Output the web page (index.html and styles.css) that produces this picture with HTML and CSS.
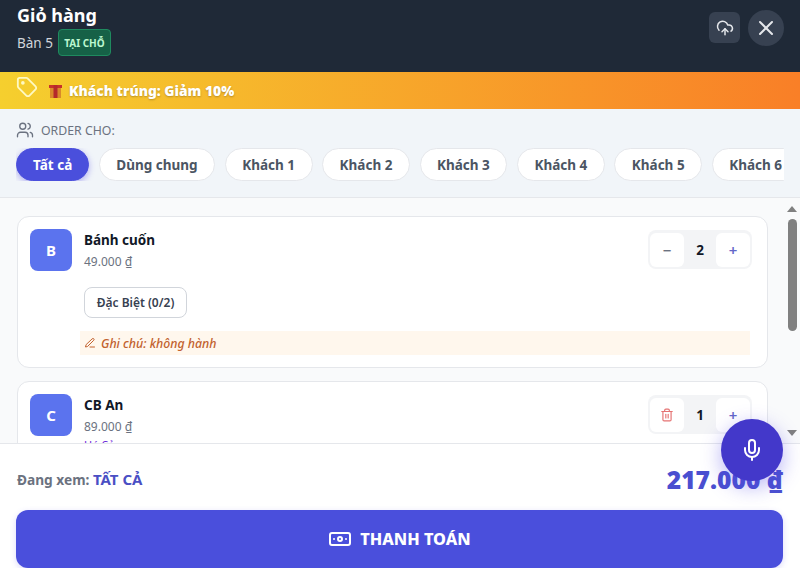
FILE: index.html
```html
<!DOCTYPE html>
<html lang="vi">

<head>
  <meta charset="UTF-8" />
  <meta name="viewport" content="width=device-width, initial-scale=1.0" />
  <link rel="stylesheet" href="styles.css">
  <title>Giỏ hàng</title>
</head>

<body>
  <div class="cart">
    <header class="cart-header">
      <div class="cart-title">
        <h1>Giỏ hàng</h1>
        <div class="table-line">
          <span>Bàn 5</span>
          <span class="tag-dine">TẠI CHỖ</span>
        </div>
      </div>
      <div class="header-actions">
        <button class="btn-upload" aria-label="Tải lên">
          <svg width="18" height="18" viewBox="0 0 24 24" fill="none" stroke="currentColor" stroke-width="2" stroke-linecap="round" stroke-linejoin="round">
            <path d="M12 13v8" />
            <path d="M4 14.9A7 7 0 1 1 15.7 8h1.8a4.5 4.5 0 0 1 2.5 8.2" />
            <path d="m8 17 4-4 4 4" />
          </svg>
        </button>
        <button class="btn-close" aria-label="Đóng">
          <svg width="24" height="24" viewBox="0 0 24 24" fill="none" stroke="currentColor" stroke-width="2" stroke-linecap="round">
            <path d="M18 6 6 18" />
            <path d="m6 6 12 12" />
          </svg>
        </button>
      </div>
    </header>

    <div class="promo">
      <svg class="promo-tag" width="22" height="22" viewBox="0 0 24 24" fill="none" stroke="currentColor" stroke-width="2" stroke-linecap="round" stroke-linejoin="round">
        <path d="M12.6 2.6A2 2 0 0 0 11.2 2H4a2 2 0 0 0-2 2v7.2a2 2 0 0 0 .6 1.4l8.7 8.7a2.4 2.4 0 0 0 3.4 0l6.6-6.6a2.4 2.4 0 0 0 0-3.4z" />
        <circle cx="7.5" cy="7.5" r="1" />
      </svg>
      <svg class="promo-gift" width="13" height="14" viewBox="0 0 13 14">
        <rect x="1" y="4" width="11" height="10" fill="#d9892a" />
        <rect x="0" y="1" width="13" height="3" fill="#c8302b" />
        <rect x="4.5" y="1" width="4" height="13" fill="#b5282b" />
      </svg>
      <span class="promo-text">Khách trúng: Giảm 10%</span>
    </div>

    <section class="guests">
      <div class="guests-label">
        <svg width="18" height="18" viewBox="0 0 24 24" fill="none" stroke="currentColor" stroke-width="1.8" stroke-linecap="round" stroke-linejoin="round">
          <path d="M16 21v-2a4 4 0 0 0-4-4H6a4 4 0 0 0-4 4v2" />
          <circle cx="9" cy="7" r="4" />
          <path d="M22 21v-2a4 4 0 0 0-3-3.87" />
          <path d="M16 3.13a4 4 0 0 1 0 7.75" />
        </svg>
        <span>ORDER CHO:</span>
      </div>
      <div class="chips">
        <button class="chip active">Tất cả</button>
        <button class="chip">Dùng chung</button>
        <button class="chip">Khách 1</button>
        <button class="chip">Khách 2</button>
        <button class="chip">Khách 3</button>
        <button class="chip">Khách 4</button>
        <button class="chip">Khách 5</button>
        <button class="chip">Khách 6</button>
      </div>
    </section>

    <div class="list-wrap">
      <main class="items">
        <article class="item">
          <div class="item-top">
            <div class="thumb">B</div>
            <div class="item-info">
              <h3>Bánh cuốn</h3>
              <div class="price">49.000 ₫</div>
            </div>
            <div class="stepper">
              <button class="step step-minus">−</button>
              <span class="qty">2</span>
              <button class="step step-plus">+</button>
            </div>
          </div>
          <button class="option">Đặc Biệt (0/2)</button>
          <div class="note">
            <svg width="12" height="12" viewBox="0 0 24 24" fill="none" stroke="currentColor" stroke-width="2" stroke-linecap="round" stroke-linejoin="round">
              <path d="M12 20h9" />
              <path d="M16.5 3.5a2.1 2.1 0 0 1 3 3L7 19l-4 1 1-4z" />
            </svg>
            <span>Ghi chú: không hành</span>
          </div>
        </article>

        <article class="item">
          <div class="item-top">
            <div class="thumb">C</div>
            <div class="item-info">
              <h3>CB An</h3>
              <div class="price">89.000 ₫</div>
              <div class="variant">Hé Cảo</div>
            </div>
            <div class="stepper">
              <button class="step step-trash" aria-label="Xóa">
                <svg width="14" height="14" viewBox="0 0 24 24" fill="none" stroke="currentColor" stroke-width="2" stroke-linecap="round" stroke-linejoin="round">
                  <path d="M3 6h18" />
                  <path d="M19 6v14a2 2 0 0 1-2 2H7a2 2 0 0 1-2-2V6" />
                  <path d="M8 6V4a2 2 0 0 1 2-2h4a2 2 0 0 1 2 2v2" />
                  <path d="M10 11v6" />
                  <path d="M14 11v6" />
                </svg>
              </button>
              <span class="qty">1</span>
              <button class="step step-plus">+</button>
            </div>
          </div>
        </article>
      </main>

      <div class="scrollbar">
        <span class="arrow arrow-up"></span>
        <span class="thumb-bar"></span>
        <span class="arrow arrow-down"></span>
      </div>
    </div>

    <footer class="cart-footer">
      <div class="summary">
        <div class="viewing">Đang xem: <span>TẤT CẢ</span></div>
        <div class="total">217.000 ₫</div>
      </div>
      <button class="pay">
        <svg width="24" height="24" viewBox="0 0 24 24" fill="none" stroke="currentColor" stroke-width="2" stroke-linecap="round" stroke-linejoin="round">
          <rect x="2" y="6" width="20" height="12" rx="2" />
          <circle cx="12" cy="12" r="2" />
          <path d="M6 12h.01M18 12h.01" />
        </svg>
        <span>THANH TOÁN</span>
      </button>
    </footer>

    <button class="mic" aria-label="Ghi âm">
      <svg width="24" height="24" viewBox="0 0 24 24" fill="none" stroke="currentColor" stroke-width="2" stroke-linecap="round" stroke-linejoin="round">
        <path d="M12 2a3 3 0 0 0-3 3v7a3 3 0 0 0 6 0V5a3 3 0 0 0-3-3Z" />
        <path d="M19 10v2a7 7 0 0 1-14 0v-2" />
        <path d="M12 19v3" />
      </svg>
    </button>
  </div>
</body>

</html>
```

FILE: styles.css
```css
* {
  box-sizing: border-box;
  padding: 0;
  margin: 0;
}

html,
body {
  height: 100%;
  overflow: hidden;
}

body {
  font-family: "Noto Sans", "Open Sans", sans-serif;
  color: #111827;
  background: #fff;
}

button {
  font-family: inherit;
  border: none;
  cursor: pointer;
}

.cart {
  position: relative;
  height: 568px;
  display: flex;
  flex-direction: column;
}

/* header */
.cart-header {
  height: 72px;
  flex-shrink: 0;
  background: #1f2937;
  color: #fff;
  display: flex;
  justify-content: space-between;
  padding: 2px 16px 0 17px;
}

.cart-title h1 {
  font-size: 18px;
  line-height: 26px;
  font-weight: 700;
}

.table-line {
  display: flex;
  align-items: center;
  gap: 5px;
  margin-top: 1px;
  font-size: 13.5px;
  color: #d1d5db;
}

.tag-dine {
  height: 27px;
  width: 53px;
  display: flex;
  align-items: center;
  justify-content: center;
  font-size: 10px;
  font-weight: 700;
  color: #bbf7d0;
  background: #166147;
  border: 1px solid #1f8a5f;
  border-radius: 4px;
}

.header-actions {
  display: flex;
  gap: 8px;
  padding-top: 8px;
}

.btn-upload,
.btn-close {
  color: #e5e7eb;
  background: #374151;
  display: flex;
  align-items: center;
  justify-content: center;
}

.btn-upload {
  width: 31px;
  height: 31px;
  margin-top: 2px;
  border-radius: 6px;
}

.btn-close {
  width: 36px;
  height: 36px;
  border-radius: 50%;
}

/* promo */
.promo {
  height: 37px;
  flex-shrink: 0;
  display: flex;
  align-items: center;
  padding-left: 16px;
  background: linear-gradient(90deg, #f5cf2e, #f97f27);
  color: #fff;
}

.promo-tag {
  margin-top: -8px;
  color: #fef9c3;
}

.promo-gift {
  margin-left: 11px;
}

.promo-text {
  margin-left: 7px;
  font-size: 13.8px;
  font-weight: 900;
  text-shadow: 0 1px 2px rgba(0, 0, 0, .25);
}

/* guest filter */
.guests {
  height: 89px;
  flex-shrink: 0;
  padding: 12px 0 0 16px;
  background: #f1f5f9;
  border-bottom: 1px solid #e5e7eb;
}

.guests-label {
  display: flex;
  align-items: center;
  gap: 7px;
  font-size: 12.3px;
  color: #6b7280;
  height: 18px;
}

.chips {
  display: flex;
  gap: 9.6px;
  margin: 9px 16px 0 0;
  overflow: hidden;
}

.chip {
  flex-shrink: 0;
  height: 33px;
  padding: 0 16.5px;
  border-radius: 17px;
  font-size: 13.5px;
  font-weight: 700;
  color: #4b5563;
  background: #fff;
  border: 1px solid #e5e7eb;
}

.chip.active {
  padding: 0 16px;
  color: #fff;
  background: #4a4fdc;
  border-color: #4a4fdc;
  box-shadow: 0 2px 6px rgba(79, 70, 229, .4);
}

/* items */
.list-wrap {
  flex: 1;
  min-height: 0;
  display: flex;
  background: #f9fafb;
}

.items {
  flex: 1;
  min-width: 0;
  overflow: hidden;
  padding: 18px 16px 0 17px;
}

.item {
  background: #fff;
  border: 1px solid #e5e7eb;
  border-radius: 12px;
  padding: 12px 15px 12px 12px;
  margin-bottom: 13px;
}

.item-top {
  display: flex;
  align-items: flex-start;
}

.thumb {
  width: 42px;
  height: 42px;
  flex-shrink: 0;
  display: flex;
  align-items: center;
  justify-content: center;
  border-radius: 8px;
  background: #5b73ee;
  color: #fff;
  font-size: 15px;
  font-weight: 700;
}

.item-info {
  flex: 1;
  margin: 1px 0 0 12px;
}

.item-info h3 {
  font-size: 13.5px;
  line-height: 20px;
  font-weight: 700;
}

.price {
  font-size: 12px;
  line-height: 23px;
  color: #6b7280;
}

.variant {
  font-size: 11px;
  line-height: 14px;
  color: #6d28d9;
}

.stepper {
  display: flex;
  align-items: center;
  height: 39px;
  padding: 2px;
  margin: 1px 0 0;
  background: #f3f4f6;
  border-radius: 8px;
}

.step {
  width: 34px;
  height: 34px;
  display: flex;
  align-items: center;
  justify-content: center;
  background: #fff;
  border-radius: 6px;
  font-size: 15px;
  font-weight: 600;
}

.step-minus {
  color: #6b7280;
}

.step-plus {
  color: #6366c8;
}

.step-trash {
  color: #e57373;
}

.qty {
  width: 32px;
  text-align: center;
  font-size: 13.5px;
  font-weight: 700;
}

.option {
  display: block;
  margin: 14px 0 0 54px;
  width: 103px;
  height: 31px;
  font-size: 12px;
  font-weight: 600;
  color: #374151;
  background: #fff;
  border: 1px solid #d1d5db;
  border-radius: 8px;
}

.note {
  display: flex;
  align-items: center;
  gap: 5px;
  height: 24px;
  margin: 13px 2px 0 50px;
  padding-left: 4px;
  background: #fff7ed;
  color: #c2622f;
  font-size: 12.3px;
  font-weight: 500;
  font-style: italic;
}

/* scrollbar */
.scrollbar {
  width: 16px;
  flex-shrink: 0;
  display: flex;
  flex-direction: column;
  align-items: center;
  padding: 8px 0 7px;
  background: #f9fafb;
}

.arrow {
  width: 0;
  height: 0;
  border-left: 5px solid transparent;
  border-right: 5px solid transparent;
}

.arrow-up {
  border-bottom: 6px solid #808080;
}

.arrow-down {
  margin-top: auto;
  border-top: 6px solid #808080;
}

.thumb-bar {
  width: 9px;
  height: 112px;
  margin-top: 7px;
  background: #808080;
  border-radius: 5px;
}

/* footer */
.cart-footer {
  height: 125px;
  flex-shrink: 0;
  padding: 0 17px 0 16px;
  background: #fff;
  border-top: 1px solid #e5e7eb;
}

.summary {
  height: 66px;
  display: flex;
  align-items: center;
  justify-content: space-between;
  padding: 4px 0 0 1px;
}

.viewing {
  font-size: 13.7px;
  font-weight: 700;
  color: #6b7280;
}

.viewing span {
  font-size: 15px;
  color: #4a4fc4;
}

.total {
  font-size: 24.6px;
  font-weight: 900;
  color: #4a4fd0;
}

.pay {
  width: 100%;
  height: 58px;
  display: flex;
  align-items: center;
  justify-content: center;
  gap: 8px;
  border-radius: 12px;
  background: #4a4fdc;
  color: #fff;
  font-size: 16.3px;
  font-weight: 800;
  box-shadow: 0 2px 6px rgba(79, 70, 229, .2);
}

/* floating mic */
.mic {
  position: absolute;
  left: 721px;
  top: 419px;
  width: 62px;
  height: 62px;
  display: flex;
  align-items: center;
  justify-content: center;
  border-radius: 50%;
  background: #4338ca;
  color: #fff;
  box-shadow: 0 6px 20px rgba(79, 70, 229, .4);
}
```
